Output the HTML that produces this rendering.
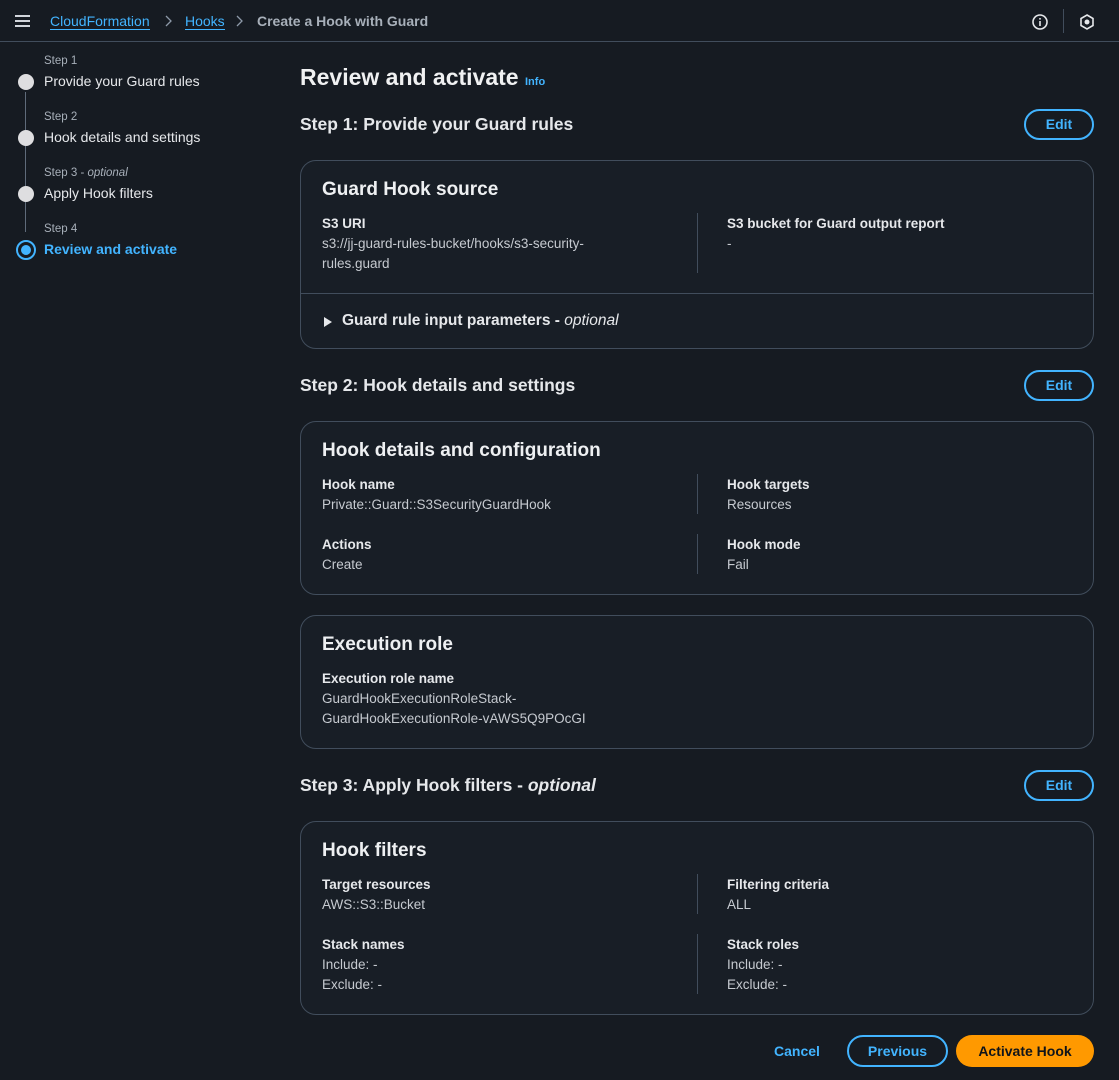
<!DOCTYPE html>
<html><head><meta charset="utf-8"><style>
*{box-sizing:border-box;margin:0;padding:0}
body{width:1119px;height:1080px;background:#161b22;font-family:"Liberation Sans",sans-serif;color:#d1d5db;font-size:14px;position:relative;overflow:hidden}
.abs{position:absolute}
.hdr{left:0;top:0;width:1119px;height:42px;border-bottom:1px solid #414d5c;background:#161b22}
.crumb{top:13px;font-size:14px;font-weight:bold}
.link{color:#42b4ff;border-bottom:1px solid #42b4ff}
.sl{font-size:11.5px;color:#a8b0ba;left:44px}
.st{font-size:14px;color:#e6e8eb;left:44px}
.dot{left:18px;width:16px;height:16px;border-radius:50%;background:#dedee0}
.vl{left:25px;width:1px;background:#5f6b7a}
h1{position:absolute;left:300px;top:64px;font-size:23px;color:#f0f1f2;font-weight:bold}
.h2{left:300px;font-size:17.5px;font-weight:bold;color:#e6e8eb}
.edit{left:1024px;width:70px;height:31px;border:2px solid #42b4ff;border-radius:16px;color:#42b4ff;font-weight:bold;text-align:center;line-height:27px;font-size:14px}
.card{left:300px;width:794px;border:1px solid #414d5c;border-radius:16px;background:#181e26}
.ct{position:absolute;left:21px;font-size:19px;font-weight:bold;color:#eef0f2}
.lb{position:absolute;font-weight:bold;color:#e6e8eb;font-size:13.5px}
.vv{position:absolute;color:#c6cad0;font-size:13.5px;line-height:20px}
.dv{position:absolute;left:396px;width:1px;background:#414d5c}
</style></head><body>
<div class="abs hdr"></div>
<div class="abs" style="left:15px;top:15px;width:15px;height:2px;background:#d1d5db;box-shadow:0 5px 0 #d1d5db,0 10px 0 #d1d5db"></div>
<div class="abs crumb" style="left:50px"><span class="link" style="font-weight:normal">CloudFormation</span></div>
<svg class="abs" style="left:165px;top:15px" width="8" height="12" viewBox="0 0 8 12"><path d="M1 1l5 5-5 5" fill="none" stroke="#8d99a8" stroke-width="1.3"/></svg>
<div class="abs crumb" style="left:185px"><span class="link" style="font-weight:normal">Hooks</span></div>
<svg class="abs" style="left:236px;top:15px" width="8" height="12" viewBox="0 0 8 12"><path d="M1 1l5 5-5 5" fill="none" stroke="#8d99a8" stroke-width="1.3"/></svg>
<div class="abs crumb" style="left:257px;color:#a8b0ba">Create a Hook with Guard</div>
<svg class="abs" style="left:1031px;top:13px" width="18" height="18" viewBox="0 0 18 18"><circle cx="9" cy="9" r="7" fill="none" stroke="#e6e8eb" stroke-width="1.6"/><rect x="8.2" y="8" width="1.6" height="5" fill="#e6e8eb"/><rect x="8.2" y="5" width="1.6" height="1.6" fill="#e6e8eb"/></svg>
<div class="abs" style="left:1063px;top:9px;width:1px;height:24px;background:#414d5c"></div>
<svg class="abs" style="left:1078px;top:13px" width="18" height="18" viewBox="0 0 18 18"><path d="M9 2l6 3.5v7L9 16l-6-3.5v-7z" fill="none" stroke="#e6e8eb" stroke-width="1.6"/><circle cx="9" cy="9" r="2.5" fill="#e6e8eb"/></svg>

<div class="abs vl" style="top:92px;height:140px"></div>
<div class="abs sl" style="top:55px">Step 1</div><div class="abs st" style="top:73px">Provide your Guard rules</div><div class="abs dot" style="top:74px"></div>
<div class="abs sl" style="top:111px">Step 2</div><div class="abs st" style="top:129px">Hook details and settings</div><div class="abs dot" style="top:130px"></div>
<div class="abs sl" style="top:167px">Step 3 - <i>optional</i></div><div class="abs st" style="top:185px">Apply Hook filters</div><div class="abs dot" style="top:186px"></div>
<div class="abs sl" style="top:223px">Step 4</div><div class="abs st" style="top:241px;color:#42b4ff;font-weight:bold">Review and activate</div>
<div class="abs" style="left:16px;top:240px;width:20px;height:20px;border-radius:50%;border:2px solid #42b4ff"></div>
<div class="abs" style="left:21px;top:245px;width:10px;height:10px;border-radius:50%;background:#42b4ff"></div>

<h1>Review and activate <span style="font-size:11px;color:#42b4ff">Info</span></h1>

<div class="abs h2" style="top:114px">Step 1: Provide your Guard rules</div>
<div class="abs edit" style="top:109px">Edit</div>
<div class="abs card" style="top:160px;height:189px">
<div class="ct" style="top:18px">Guard Hook source</div>
<div class="lb" style="left:21px;top:55px">S3 URI</div>
<div class="vv" style="left:21px;top:73px">s3://jj-guard-rules-bucket/hooks/s3-security-<br>rules.guard</div>
<div class="dv" style="top:52px;height:60px"></div>
<div class="lb" style="left:426px;top:55px">S3 bucket for Guard output report</div>
<div class="vv" style="left:426px;top:73px">-</div>
<div style="position:absolute;left:0;right:0;top:132px;height:1px;background:#414d5c"></div>
<div style="position:absolute;left:23px;top:156px;width:0;height:0;border-left:8px solid #e6e8eb;border-top:5px solid transparent;border-bottom:5px solid transparent"></div>
<div class="lb" style="left:41px;top:151px;font-size:15.5px">Guard rule input parameters - <i style="font-weight:normal">optional</i></div>
</div>

<div class="abs h2" style="top:375px">Step 2: Hook details and settings</div>
<div class="abs edit" style="top:370px">Edit</div>
<div class="abs card" style="top:421px;height:174px">
<div class="ct" style="top:18px">Hook details and configuration</div>
<div class="lb" style="left:21px;top:55px">Hook name</div><div class="vv" style="left:21px;top:73px">Private::Guard::S3SecurityGuardHook</div>
<div class="lb" style="left:21px;top:115px">Actions</div><div class="vv" style="left:21px;top:133px">Create</div>
<div class="dv" style="top:52px;height:40px"></div><div class="dv" style="top:112px;height:40px"></div>
<div class="lb" style="left:426px;top:55px">Hook targets</div><div class="vv" style="left:426px;top:73px">Resources</div>
<div class="lb" style="left:426px;top:115px">Hook mode</div><div class="vv" style="left:426px;top:133px">Fail</div>
</div>

<div class="abs card" style="top:615px;height:134px">
<div class="ct" style="top:18px">Execution role</div>
<div class="lb" style="left:21px;top:55px">Execution role name</div>
<div class="vv" style="left:21px;top:73px">GuardHookExecutionRoleStack-<br>GuardHookExecutionRole-vAWS5Q9POcGI</div>
</div>

<div class="abs h2" style="top:775px">Step 3: Apply Hook filters - <i>optional</i></div>
<div class="abs edit" style="top:770px">Edit</div>
<div class="abs card" style="top:821px;height:194px">
<div class="ct" style="top:18px">Hook filters</div>
<div class="lb" style="left:21px;top:55px">Target resources</div><div class="vv" style="left:21px;top:73px">AWS::S3::Bucket</div>
<div class="lb" style="left:21px;top:115px">Stack names</div><div class="vv" style="left:21px;top:133px">Include: -<br>Exclude: -</div>
<div class="dv" style="top:52px;height:40px"></div><div class="dv" style="top:112px;height:60px"></div>
<div class="lb" style="left:426px;top:55px">Filtering criteria</div><div class="vv" style="left:426px;top:73px">ALL</div>
<div class="lb" style="left:426px;top:115px">Stack roles</div><div class="vv" style="left:426px;top:133px">Include: -<br>Exclude: -</div>
</div>

<div class="abs" style="left:774px;top:1043px;color:#42b4ff;font-weight:bold">Cancel</div>
<div class="abs" style="left:847px;top:1035px;width:101px;height:32px;border:2px solid #42b4ff;border-radius:16px;color:#42b4ff;font-weight:bold;text-align:center;line-height:28px">Previous</div>
<div class="abs" style="left:956px;top:1035px;width:138px;height:32px;background:#ff9900;border-radius:16px;color:#0f141a;font-weight:bold;text-align:center;line-height:32px">Activate Hook</div>
</body></html>
